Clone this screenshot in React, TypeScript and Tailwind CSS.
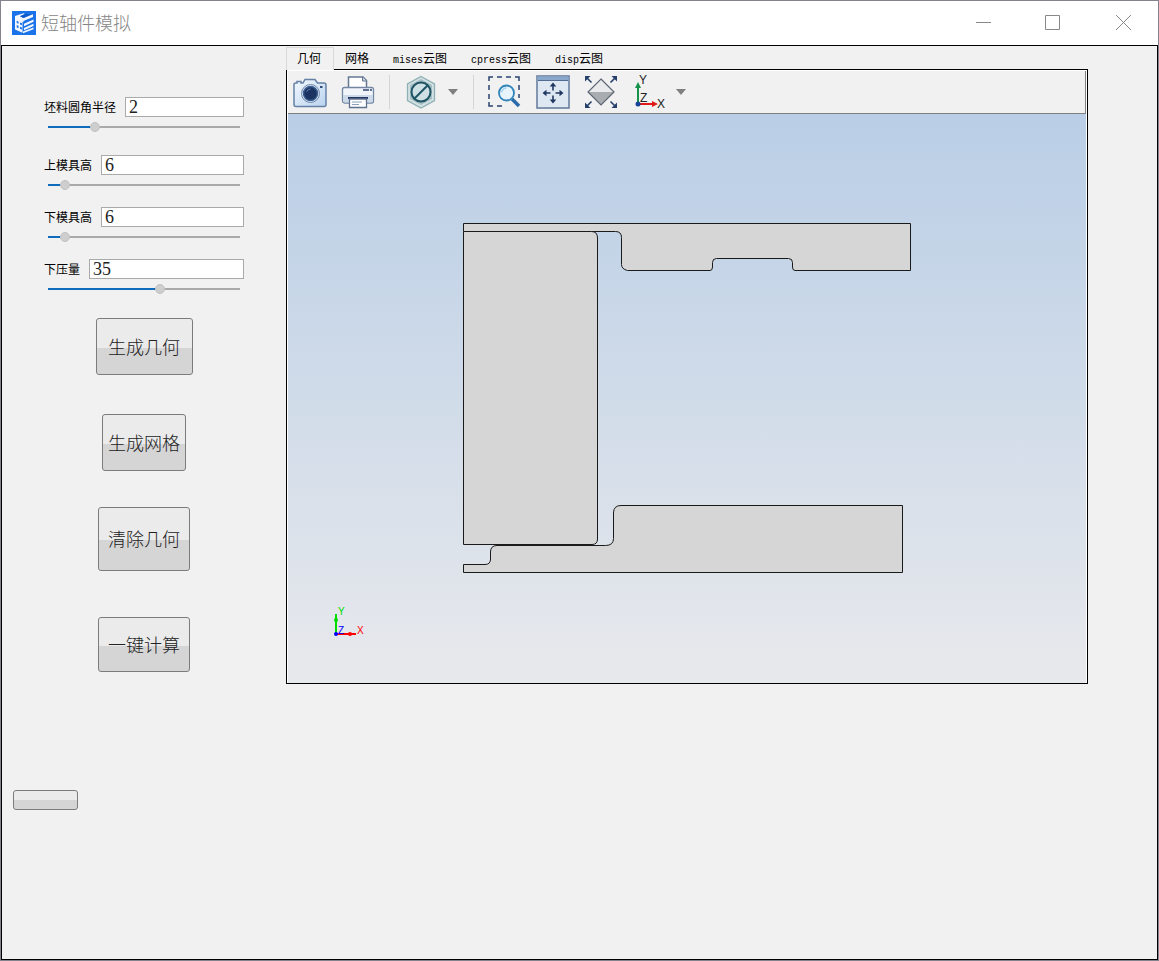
import React from "react";

type Param = {
  id: string;
  label: string;
  value: number;
  min: number;
  max: number;
};

const initialParams: Param[] = [
  { id: 'radius', label: '坯料圆角半径', value: 2, min: 0.5, max: 7 },
  { id: 'upper', label: '上模具高', value: 6, min: 5, max: 20 },
  { id: 'lower', label: '下模具高', value: 6, min: 5, max: 20 },
  { id: 'press', label: '下压量', value: 35, min: 15, max: 49 }
];

const tabs = [
  { latin: '', text: '几何' },
  { latin: '', text: '网格' },
  { latin: 'mises', text: '云图' },
  { latin: 'cpress', text: '云图' },
  { latin: 'disp', text: '云图' }
];

const actions = [
  { label: '生成几何', size: 'w-[97px] h-[57px]' },
  { label: '生成网格', size: 'w-[84px] h-[57px] mt-[39px]' },
  { label: '清除几何', size: 'w-[92px] h-16 mt-9' },
  { label: '一键计算', size: 'w-[92px] h-[55px] mt-[46px]' }
];

const buttonFace = 'rounded-[3px] border border-[#7c7c7c] bg-[linear-gradient(#ebebeb_52%,#d5d5d5_52%)] active:bg-[#cfcfcf]';

function Logo() {
  return (
    <svg className="w-6 h-6" viewBox="0 0 24 24">
      <rect width="24" height="24" fill="#1a73e8" />
      <path d="M3 5 11.500 2.200 13 3 8 5.200 11.500 7 21 3.200V6l-9.500 4L3 6.800z" fill="#f4f8fe" />
      <path d="M8 5.200 14 2.500l5 1-7.500 3.500z" fill="#0d5cc9" />
      <path d="M3 6v12.500l7.500 3.200V18.500L9 18V10.200l2.500 1V9.500z" fill="#f4f8fe" />
      <path d="M9 10v8l1.500.500V10.500z" fill="#f4f8fe" />
      <path d="M4.700 9.800 6.500 10.500v2.300L4.700 12zM4.700 14 6.500 14.800v2.400L4.700 16.400zM8 11.500l2 .800v2l-2-.800zM8 15.700l2 .800v2l-2-.800z" fill="#1a73e8" />
      <path d="M12 12.800 21.500 8.500v2.300L12 15.200zM12 17l9.500-4.300V15L12 19.300zM11 20.500l10.500-4V18.200L11 22.300z" fill="#f4f8fe" />
    </svg>
  );
}

function CameraIcon() {
  return (
    <svg viewBox="0 0 34 34">
      <defs>
        <linearGradient id="cam" x1="0" y1="0" x2="1" y2="1">
          <stop offset="0" stopColor="#f4f9fe" />
          <stop offset="1" stopColor="#b9d3ef" />
        </linearGradient>
      </defs>
      <path d="M1 9.500q0-1.500 2-1.500h1V6.500h4V8h2l2-3.500h10L24.500 8H31q2 0 2 2v19.500q0 2-2 2H3q-2 0-2-2z" fill="url(#cam)" stroke="#6681a6" strokeWidth="1.500" />
      <circle cx="17.500" cy="18.500" r="9" fill="#dbe8f5" stroke="#6f87a8" />
      <circle cx="17.500" cy="18.500" r="7" fill="#1c3462" stroke="#3c5f91" strokeWidth="1.500" />
      <path d="M13.500 17q1-3 4-3" stroke="#5878aa" fill="none" />
      <rect x="27" y="11" width="2.500" height="2" fill="#344d79" />
    </svg>
  );
}

function PrinterIcon() {
  return (
    <svg viewBox="0 0 34 34">
      <path d="M7.500 14V2h14.500l3.500 3.500V14z" fill="#fff" stroke="#647894" strokeWidth="1.500" />
      <path d="M21.500 2v4h4" fill="#c9d6e6" stroke="#647894" />
      <rect x="1.500" y="12.500" width="31" height="15.500" rx="2" fill="#f1f5fa" stroke="#7387a4" strokeWidth="1.300" />
      <path d="M2 20h30v5.500q0 2-2 2H4q-2 0-2-2z" fill="#ccd9e8" />
      <path d="M22 15h6M29 15h2" stroke="#2e4574" strokeWidth="1.300" />
      <path d="M7 23h20" stroke="#24365f" strokeWidth="2" />
      <path d="M8.500 24h17v8.500h-17z" fill="#fff" stroke="#5e7290" strokeWidth="1.300" />
      <path d="M11 27h10M11 29.500h7" stroke="#8ba0ba" />
    </svg>
  );
}

function HiddenIcon() {
  return (
    <svg viewBox="0 0 34 34">
      <path d="M17 1.500 30.500 9v16.500L17 33 3.500 25.500V9z" fill="#d4e1e4" stroke="#8eb0b5" strokeWidth="1.300" />
      <path d="M17 4 28 10v14L17 30 6 24V10z" fill="#a6bfc4" />
      <circle cx="17" cy="17" r="9.500" fill="#cfe0e5" stroke="#1e5364" strokeWidth="2" />
      <path d="M10.500 23.500 23.500 10.500" stroke="#1e5364" strokeWidth="2" />
    </svg>
  );
}

function ZoomBoxIcon() {
  return (
    <svg viewBox="0 0 34 34">
      <path d="M1 6V2h4M9 2h5M18 2h5M27 2h4v4M31 10v5M1 10v5M1 19v5M1 27v4h4M9 31h5M31 19v4" fill="none" stroke="#2a4370" strokeWidth="1.500" />
      <path d="m24 24 7 7" stroke="#2d6cab" strokeWidth="3.500" />
      <circle cx="18.500" cy="18" r="7.500" fill="#e8f4fc" stroke="#2e83b9" strokeWidth="1.800" />
      <path d="M13.500 17.500q1-4.500 5-4.500" fill="none" stroke="#a4d4ef" strokeWidth="1.500" />
    </svg>
  );
}

function PanIcon() {
  return (
    <svg viewBox="0 0 34 34">
      <rect x="1" y="1" width="32" height="32" fill="#dee8f2" stroke="#6a7fa0" strokeWidth="1.600" />
      <rect x="1.500" y="1.500" width="31" height="3.500" fill="#8aa8cb" />
      <path d="M2 5.500h30" stroke="#526b92" />
      <path d="M17 15.500V10M17 20.500V26M14.500 18H9M19.500 18H25" stroke="#203861" strokeWidth="1.600" />
      <path d="m17 7.500 3.300 4h-6.600zM17 28.500l3.300-4h-6.600zM6.500 18l4-3.300v6.600zM27.500 18l-4-3.300v6.600z" fill="#203861" />
    </svg>
  );
}

function FitIcon() {
  return (
    <svg viewBox="0 0 34 34">
      <path d="M17 4 30 17H4z" fill="#e9eaec" />
      <path d="M4 17h26L17 30z" fill="#a9acb1" />
      <path d="M17 4 30 17 17 30 4 17z" fill="none" stroke="#5c6572" strokeWidth="1.200" />
      <path d="M7.500 7.500 3 3M26.500 7.500 31 3M7.500 26.500 3 31M26.500 26.500l4.500 4.500" stroke="#263f6b" strokeWidth="1.600" />
      <path d="M1 1h5.500L1 6.500zM33 1v5.500L27.500 1zM1 33v-5.500L6.500 33zM33 33h-5.500l5.500-5.500z" fill="#263f6b" />
    </svg>
  );
}

function AxesIcon() {
  return (
    <svg viewBox="0 0 34 34" className="overflow-visible font-['Liberation_Sans',sans-serif] text-[12px]">
      <path d="M6 29V13" stroke="#16924a" strokeWidth="2" />
      <path d="m6 7 3 6H3z" fill="#16924a" />
      <path d="M6 29h14" stroke="#e01818" strokeWidth="2" />
      <path d="m26 29-6-3v6z" fill="#e01818" />
      <circle cx="6" cy="29" r="2.500" fill="#17439a" />
      <text x="7" y="9" fill="#222">Y</text>
      <text x="8" y="27" fill="#222">Z</text>
      <text x="25" y="33" fill="#222">X</text>
    </svg>
  );
}

function Tool({ title, children }: { title: string; children: React.ReactNode }) {
  return (
    <button aria-label={title} className="w-[34px] h-[34px] hover:bg-[#dde8f3]">
      {children}
    </button>
  );
}

function DropArrow({ title }: { title: string }) {
  return (
    <button aria-label={title} className="w-[11px] h-[34px] flex items-center">
      <svg viewBox="0 0 11 6" className="w-[11px] h-[6px]">
        <path d="M0 0h10L5 6z" fill="#7f7f7f" />
      </svg>
    </button>
  );
}

function GeometryView() {
  return (
    <svg viewBox="0 0 798 569" className="block w-full h-auto bg-linear-to-b from-[#b9cee6] to-[#e8e9ec]">
      <g fill="#d6d6d6" stroke="#1a1a1a" strokeWidth="1">
        {/* upper die */}
        <path d="M175.5 117.5V109.5H622.5V156.5H507Q504.500 156.500 504.500 153V148.500Q504.500 144.500 500.500 144.500H428.500Q424.500 144.500 424.500 148.500V153Q424.500 156.500 422 156.500H339.500Q333.500 155 333.500 150.500V123.500Q333.500 117.500 327.500 117.500Z" />
        {/* lower die */}
        <path d="M175.5 458.5V450.5H197Q202.500 450.500 202.500 445V438Q202.500 431.500 209 431.500H317.500Q325.500 431.500 325.500 424.500V399Q325.500 391.500 333 391.500H614.500V458.500Z" />
        {/* billet */}
        <path d="M175.5 117.5H303.500Q309.500 117.500 309.500 124V425Q309.500 430.500 304 430.500H175.500Z" />
      </g>
      <g strokeWidth="2">
        <path d="M48 520V500" stroke="#00dc00" />
        <path d="M48 520H68" stroke="#ff0000" />
        <circle cx="48" cy="506" r="2" fill="#00dc00" />
        <circle cx="62" cy="520" r="2" fill="#ff0000" />
        <circle cx="48" cy="520" r="2" fill="#0000ff" />
      </g>
      <g className="font-['Liberation_Sans',sans-serif] text-[10px]">
        <text x="50" y="501" fill="#00dc00">Y</text>
        <text x="50" y="520" fill="#0000ff">Z</text>
        <text x="69" y="520" fill="#ff0000">X</text>
      </g>
    </svg>
  );
}

export default function App() {
  const [params, setParams] = React.useState<Param[]>(initialParams);
  const [activeTab, setActiveTab] = React.useState(0);

  const updateParam = (id: string, value: number) => {
    setParams((prev) => prev.map((p) => (p.id === id ? { ...p, value } : p)));
  };

  return (
    <div className="min-h-screen flex flex-col border border-[#83838d] bg-white font-['Noto_Sans_CJK_SC',sans-serif]">
      <header className="h-11 flex items-center justify-between pl-[11px]">
        <div className="flex items-center gap-[5px]">
          <Logo />
          <h1 className="text-[18px] leading-[22px] pb-[2px] font-light text-[#858585]">短轴件模拟</h1>
        </div>
        <div className="flex text-[#888]">
          <button aria-label="最小化" className="w-[70px] h-11 flex items-center justify-center hover:bg-gray-100">
            <svg className="w-4 h-4" viewBox="0 0 16 16" stroke="currentColor"><path d="M1 7.500h15" /></svg>
          </button>
          <button aria-label="最大化" className="w-[70px] h-11 flex items-center justify-center hover:bg-gray-100">
            <svg className="w-4 h-4" viewBox="0 0 16 16" stroke="currentColor" fill="none"><path d="M.500.500h14v14H.500z" /></svg>
          </button>
          <button aria-label="关闭" className="w-[70px] h-11 flex items-center justify-center hover:bg-gray-100">
            <svg className="w-4 h-4" viewBox="0 0 16 16" stroke="currentColor"><path d="m1 0 15 15M16 0 1 15" /></svg>
          </button>
        </div>
      </header>

      <main className="flex-1 flex items-start border border-black bg-[#f1f1f1]">
        <aside className="w-[284px] shrink-0 pl-[11px] pt-[51px]">
          <div className="w-[200px] ml-[31px]">
            <div className="flex flex-col gap-4">
              {params.map((p, i) => {
                const pct = ((p.value - p.min) / (p.max - p.min)) * 100;
                return (
                  <div key={p.id} className={i === 0 ? 'mb-[6px]' : ''}>
                    <div className="flex items-center gap-[9px]">
                      <label htmlFor={p.id} className="shrink-0 text-[12px] leading-5 text-black">{p.label}</label>
                      <input
                        id={p.id}
                        type="text"
                        value={p.value}
                        onChange={(e) => updateParam(p.id, Number(e.target.value) || 0)}
                        className="flex-1 min-w-0 h-5 pl-[3px] pt-px border border-[#aaa] bg-white font-['Liberation_Serif',serif] text-[18px] leading-[18px] text-[#222] outline-none"
                      />
                    </div>
                    <input
                      type="range"
                      aria-label={p.label}
                      min={p.min}
                      max={p.max}
                      step="any"
                      value={p.value}
                      onChange={(e) => updateParam(p.id, Math.round(Number(e.target.value)))}
                      style={{ backgroundImage: `linear-gradient(to right, #0f6cbd ${pct}%, #aaa ${pct}%)` }}
                      className="block w-48 h-3 mx-1 mt-1 appearance-none bg-[length:100%_2px] bg-center bg-no-repeat [&::-webkit-slider-thumb]:appearance-none [&::-webkit-slider-thumb]:w-[10px] [&::-webkit-slider-thumb]:h-[10px] [&::-webkit-slider-thumb]:rounded-full [&::-webkit-slider-thumb]:bg-[#cecece] [&::-webkit-slider-thumb]:border [&::-webkit-slider-thumb]:border-[#c2c2c2]"
                    />
                  </div>
                );
              })}
            </div>

            <div className="flex flex-col items-center mt-[23px]">
              {actions.map((a) => (
                <button key={a.label} className={`${buttonFace} ${a.size} pb-[2px] text-[18px] leading-6 font-light text-[#222] whitespace-nowrap`}>
                  {a.label}
                </button>
              ))}
            </div>
          </div>
          <button aria-label="状态" className={`${buttonFace} block w-[65px] h-5 mt-[118px]`}></button>
        </aside>

        <section className="flex-1 min-w-0 mr-[69px] pt-px">
          <div role="tablist" className="flex">
            {tabs.map((tab, i) => (
              <button
                key={i}
                role="tab"
                aria-selected={i === activeTab}
                onClick={() => setActiveTab(i)}
                className={`h-[23px] pl-[10px] pr-3 border border-b-0 text-[12px] leading-5 text-black flex items-baseline whitespace-nowrap ${
                  i === activeTab
                    ? 'relative z-10 -mb-px border-[#d9d9d9] bg-[#f1f1f1]'
                    : 'border-transparent'
                }`}
              >
                {tab.latin && <span className="font-['Liberation_Mono',monospace] text-[10px]">{tab.latin}</span>}
                <span>{tab.text}</span>
              </button>
            ))}
          </div>

          <div className="border border-black bg-white px-px pt-px -mt-px">
            <div className="h-[43px] flex items-center gap-[14px] pl-[5px] border-b border-r border-[#808080] bg-[#f1f1f1]">
              <Tool title="截图"><CameraIcon /></Tool>
              <Tool title="打印"><PrinterIcon /></Tool>
              <span className="w-px h-[34px] bg-[#d5d5d5]" />
              <div className="flex items-center gap-[10px]">
                <Tool title="隐藏"><HiddenIcon /></Tool>
                <DropArrow title="隐藏选项" />
              </div>
              <span className="w-px h-[34px] bg-[#d5d5d5]" />
              <Tool title="框选缩放"><ZoomBoxIcon /></Tool>
              <Tool title="平移"><PanIcon /></Tool>
              <Tool title="适应窗口"><FitIcon /></Tool>
              <div className="flex items-center gap-[10px]">
                <Tool title="坐标轴"><AxesIcon /></Tool>
                <DropArrow title="视角选项" />
              </div>
            </div>
            <GeometryView />
          </div>
        </section>
      </main>
    </div>
  );
}
